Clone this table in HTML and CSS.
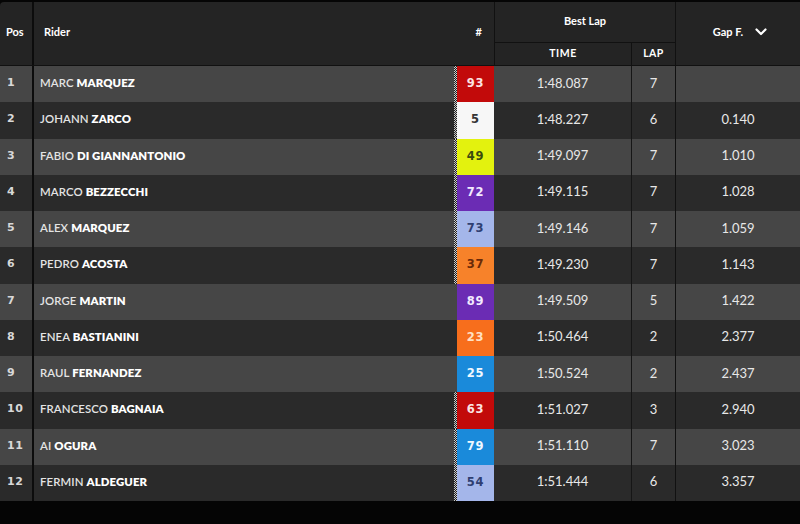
FILE: index.html
```html
<!DOCTYPE html>
<html lang="en">
<head>
<meta charset="utf-8">
<title>Best Lap</title>
<link rel="stylesheet" href="styles.css">
</head>
<body>
<div class="board">
  <div class="head">
    <div class="h-pos">Pos</div>
    <div class="h-rider">Rider</div>
    <div class="h-num">#</div>
    <div class="h-best">
      <div class="h-best-title">Best Lap</div>
      <div class="h-best-sub">
        <div class="h-time">TIME</div>
        <div class="h-lap">LAP</div>
      </div>
    </div>
    <div class="h-gap">Gap F.
      <svg class="chev" width="12" height="8" viewBox="0 0 12 8"><path d="M1.5 1.5 L6 6 L10.5 1.5" fill="none" stroke="#fff" stroke-width="2.2" stroke-linecap="round" stroke-linejoin="round"/></svg>
    </div>
  </div>
  <div class="rows">
    <div class="row"><div class="pos">1</div><div class="rider">MARC <b>MARQUEZ</b></div><div class="num flag"><span class="badge red">93</span></div><div class="time">1:48.087</div><div class="lap">7</div><div class="gap"></div></div>
    <div class="row"><div class="pos">2</div><div class="rider">JOHANN <b>ZARCO</b></div><div class="num flag"><span class="badge white">5</span></div><div class="time">1:48.227</div><div class="lap">6</div><div class="gap">0.140</div></div>
    <div class="row"><div class="pos">3</div><div class="rider">FABIO <b>DI GIANNANTONIO</b></div><div class="num flag"><span class="badge lime">49</span></div><div class="time">1:49.097</div><div class="lap">7</div><div class="gap">1.010</div></div>
    <div class="row"><div class="pos">4</div><div class="rider">MARCO <b>BEZZECCHI</b></div><div class="num flag"><span class="badge purple">72</span></div><div class="time">1:49.115</div><div class="lap">7</div><div class="gap">1.028</div></div>
    <div class="row"><div class="pos">5</div><div class="rider">ALEX <b>MARQUEZ</b></div><div class="num flag"><span class="badge sky">73</span></div><div class="time">1:49.146</div><div class="lap">7</div><div class="gap">1.059</div></div>
    <div class="row"><div class="pos">6</div><div class="rider">PEDRO <b>ACOSTA</b></div><div class="num flag"><span class="badge orange">37</span></div><div class="time">1:49.230</div><div class="lap">7</div><div class="gap">1.143</div></div>
    <div class="row"><div class="pos">7</div><div class="rider">JORGE <b>MARTIN</b></div><div class="num"><span class="badge purple">89</span></div><div class="time">1:49.509</div><div class="lap">5</div><div class="gap">1.422</div></div>
    <div class="row"><div class="pos">8</div><div class="rider">ENEA <b>BASTIANINI</b></div><div class="num"><span class="badge tangerine">23</span></div><div class="time">1:50.464</div><div class="lap">2</div><div class="gap">2.377</div></div>
    <div class="row"><div class="pos">9</div><div class="rider">RAUL <b>FERNANDEZ</b></div><div class="num"><span class="badge blue">25</span></div><div class="time">1:50.524</div><div class="lap">2</div><div class="gap">2.437</div></div>
    <div class="row"><div class="pos">10</div><div class="rider">FRANCESCO <b>BAGNAIA</b></div><div class="num flag"><span class="badge red">63</span></div><div class="time">1:51.027</div><div class="lap">3</div><div class="gap">2.940</div></div>
    <div class="row"><div class="pos">11</div><div class="rider">AI <b>OGURA</b></div><div class="num flag"><span class="badge blue">79</span></div><div class="time">1:51.110</div><div class="lap">7</div><div class="gap">3.023</div></div>
    <div class="row"><div class="pos">12</div><div class="rider">FERMIN <b>ALDEGUER</b></div><div class="num flag"><span class="badge sky">54</span></div><div class="time">1:51.444</div><div class="lap">6</div><div class="gap">3.357</div></div>
  </div>
</div>
</body>
</html>
```
FILE: styles.css
```css
html, body {
  margin: 0;
  padding: 0;
  background: #050505;
}
body {
  width: 800px;
  height: 524px;
  overflow: hidden;
  font-family: Lato, "Open Sans", sans-serif;
  color: #ececec;
}
.board {
  margin-top: 2px;
  width: 800px;
}
.head {
  display: grid;
  grid-template-columns: 34px 1fr 40px 181px 125px;
  height: 63px;
  background: #242424;
  border-bottom: 1px solid #111;
  font-weight: 700;
  font-size: 11px;
  color: #fff;
  border-top-left-radius: 4px;
}
.head > div {
  display: flex;
  align-items: center;
  padding-bottom: 4px;
  box-sizing: border-box;
}
.h-pos {
  padding-left: 6px;
  border-right: 2px solid #0c0c0c;
}
.h-rider {
  padding-left: 10px;
}
.h-num {
  justify-content: flex-end;
  padding-right: 12px;
}
.head > .h-best {
  display: flex;
  flex-direction: column;
  align-items: stretch;
  border-left: 1px solid #111;
  padding-bottom: 0;
}
.h-best-title {
  height: 41px;
  display: flex;
  align-items: center;
  justify-content: center;
  border-bottom: 1px solid #111;
  padding-bottom: 4px;
  box-sizing: border-box;
}
.h-best-sub {
  flex: 1;
  display: grid;
  grid-template-columns: 136px 44px;
}
.h-time, .h-lap {
  display: flex;
  align-items: center;
  justify-content: center;
  letter-spacing: 0.5px;
  font-size: 10.5px;
  padding-bottom: 3px;
}
.h-lap {
  border-left: 1px solid #111;
}
.head > .h-gap {
  justify-content: center;
  gap: 12px;
  border-left: 1px solid #111;
  padding-left: 4px;
}
.chev {
  display: block;
}
.row {
  display: grid;
  grid-template-columns: 34px 1fr 40px 137px 44px 125px;
  height: 36.25px;
  background: #2a2a2a;
  align-items: stretch;
}
.row:nth-child(odd) {
  background: #464646;
}
.row > div {
  display: flex;
  align-items: center;
  padding-bottom: 3px;
  box-sizing: border-box;
}
.pos {
  padding-left: 7px;
  border-right: 2px solid #0c0c0c;
  font-family: "DejaVu Sans", sans-serif;
  font-weight: 700;
  font-size: 11px;
  letter-spacing: 0.6px;
  color: #d8d8d8;
}
.rider {
  padding-left: 6px;
  font-size: 11.4px;
  font-weight: 600;
  color: #e4e4e4;
  letter-spacing: 0.1px;
  white-space: pre;
}
.rider b {
  font-weight: 800;
  color: #fff;
}
.row > .num {
  align-items: stretch;
  padding-left: 3px;
  padding-bottom: 0;
  position: relative;
}
.num.flag::before {
  content: "";
  position: absolute;
  left: 0;
  top: 0;
  bottom: 0;
  width: 3px;
  background-image: repeating-conic-gradient(#cfcfcf 0 25%, #1c1c1c 0 50%);
  background-size: 2px 2px;
}
.badge {
  flex: 1;
  display: flex;
  align-items: center;
  justify-content: center;
  padding-bottom: 2px;
  font-family: "DejaVu Sans", sans-serif;
  font-weight: 700;
  font-size: 11.5px;
  letter-spacing: 0.8px;
}
.red { background: #c20a0a; color: #fbe3e3; }
.white { background: #f7f7f7; color: #353535; }
.lime { background: #e3f20e; color: #3b4a10; }
.purple { background: #6b2cb4; color: #f2eaff; }
.sky { background: #a4b6ea; color: #2f3f72; }
.orange { background: #f7822a; color: #6a2a08; }
.tangerine { background: #f76e1c; color: #ffe1c4; }
.blue { background: #1a8ada; color: #f0f8ff; }
.time {
  justify-content: center;
  font-size: 13px;
  color: #e8e8e8;
}
.lap {
  justify-content: center;
  font-size: 13px;
  border-left: 1px solid #161616;
  color: #e8e8e8;
}
.gap {
  justify-content: center;
  font-size: 13px;
  border-left: 1px solid #111;
  color: #e8e8e8;
}
```
